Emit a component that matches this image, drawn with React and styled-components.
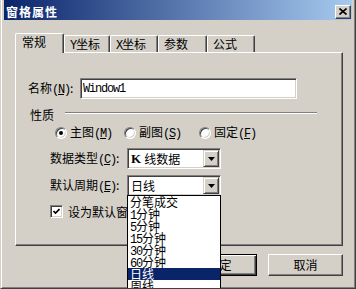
import React from 'react';
import styled, { createGlobalStyle } from 'styled-components';

const GlobalStyle = createGlobalStyle`
  html, body {
    margin: 0;
    padding: 0;
    width: 356px;
    height: 289px;
    overflow: hidden;
    background: #d4d0c8;
  }
  body {
    font-family: "Noto Sans CJK SC", "Liberation Sans", sans-serif;
    font-size: 12px;
    color: #000;
  }
`;

const Window = styled.div`
  width: 356px;
  height: 289px;
  box-sizing: border-box;
  overflow: hidden;
  background: #d4d0c8;
  border-left: 1px solid #d4d0c8;
  border-right: 1px solid #404040;
  border-bottom: 1px solid #404040;
  box-shadow: inset 1px 0 #fff, inset -1px -1px #808080;
  padding: 0 3px 3px 3px;
`;

const TitleBar = styled.div`
  height: 20px;
  box-sizing: border-box;
  padding: 3px 1px 0 2px;
  display: flex;
  align-items: center;
  background: linear-gradient(to right, #0a246a, #a6caf0);
`;

const TitleText = styled.div`
  flex: 1;
  color: #fff;
  font-weight: bold;
  font-size: 12px;
  letter-spacing: 1px;
  line-height: 14px;
`;

const CloseButton = styled.div`
  width: 16px;
  height: 14px;
  box-sizing: border-box;
  background: #d4d0c8;
  border: 1px solid;
  border-color: #fff #404040 #404040 #fff;
  box-shadow: inset -1px -1px #808080;
  display: flex;
  align-items: center;
  justify-content: center;
`;

const Body = styled.div`
  padding: 13px 0 0 11px;
`;

const TabRow = styled.div`
  display: flex;
  align-items: flex-end;
  height: 20px;
  margin-bottom: -1px;
  position: relative;
  z-index: 1;
`;

const Tab = styled.div`
  width: ${(p) => p.$w}px;
  height: ${(p) => (p.$active ? 20 : 17)}px;
  margin-bottom: ${(p) => (p.$active ? 0 : 1)}px;
  box-sizing: border-box;
  padding: 1px 0 0 ${(p) => (p.$active ? 6 : 5)}px;
  line-height: 14px;
  background: #d4d0c8;
  border-top: 1px solid #fff;
  border-left: 1px solid #fff;
  border-right: 1px solid #404040;
  border-radius: 2px 2px 0 0;
  box-shadow: inset -1px 0 #808080;
  white-space: nowrap;
`;

const Panel = styled.div`
  width: 328px;
  height: 194px;
  box-sizing: border-box;
  border-top: 1px solid #fff;
  border-left: 1px solid #fff;
  border-right: 1px solid #404040;
  border-bottom: 1px solid #404040;
  box-shadow: inset -1px -1px #808080;
  padding: 25px 0 0 12px;
`;

const Row = styled.div`
  display: flex;
  align-items: center;
  height: ${(p) => p.$h || 21}px;
  margin-top: ${(p) => p.$mt || 0}px;
  padding-left: ${(p) => p.$pl || 0}px;
`;

const Label = styled.div`
  width: ${(p) => p.$w}px;
  flex: none;
  line-height: 14px;
  white-space: nowrap;
`;

const Lat = styled.span`
  font-family: "Liberation Mono", monospace;
  font-size: 12px;
  letter-spacing: -1.2px;
`;

const KGlyph = styled.span`
  font-family: "Liberation Serif", serif;
  font-weight: bold;
  font-size: 13px;
  margin-right: 3px;
`;

const sunken = `
  background: #fff;
  border: 1px solid;
  border-color: #808080 #fff #fff #808080;
  box-shadow: inset 1px 1px #404040, inset -1px -1px #d4d0c8;
`;

const TextBox = styled.div`
  ${sunken}
  width: 217px;
  height: 21px;
  box-sizing: border-box;
  padding-left: 2px;
  display: flex;
  align-items: center;
  font-family: "Liberation Mono", monospace;
  font-size: 12px;
  letter-spacing: -1.2px;
`;

const GroupLabel = styled.div`
  margin-left: 2px;
  line-height: 14px;
`;

const GroupLine = styled.div`
  width: 252px;
  margin-left: 11px;
  align-self: flex-start;
  margin-top: 4px;
  border-top: 1px solid #808080;
  border-bottom: 1px solid #fff;
`;

const RadioItem = styled.div`
  width: ${(p) => p.$w}px;
  flex: none;
  display: flex;
  align-items: center;
  gap: 3px;
  line-height: 14px;
  white-space: nowrap;
`;

const RadioCircle = styled.div`
  width: 12px;
  height: 12px;
  box-sizing: border-box;
  border-radius: 50%;
  ${sunken}
  display: flex;
  align-items: center;
  justify-content: center;
  &::after {
    content: '';
    display: ${(p) => (p.$checked ? 'block' : 'none')};
    width: 4px;
    height: 4px;
    border-radius: 50%;
    background: #000;
  }
`;

const Select = styled.div`
  ${sunken}
  position: relative;
  width: 94px;
  height: 21px;
  box-sizing: border-box;
  display: flex;
  align-items: stretch;
  padding: 1px;
`;

const SelectText = styled.div`
  flex: 1;
  padding-left: 2px;
  display: flex;
  align-items: center;
  line-height: 14px;
`;

const DropButton = styled.div`
  width: 16px;
  box-sizing: border-box;
  background: #d4d0c8;
  border: 1px solid;
  border-color: #d4d0c8 #404040 #404040 #d4d0c8;
  box-shadow: inset 1px 1px #fff, inset -1px -1px #808080;
  display: flex;
  align-items: center;
  justify-content: center;
`;

const DropList = styled.div`
  position: absolute;
  top: 19px;
  left: -1px;
  width: 94px;
  box-sizing: border-box;
  background: #fff;
  border: 1px solid #000;
  z-index: 5;
`;

const ListItem = styled.div`
  height: 12px;
  line-height: 12px;
  padding-left: 2px;
  white-space: nowrap;
  background: ${(p) => (p.$selected ? '#0a246a' : 'transparent')};
  color: ${(p) => (p.$selected ? '#fff' : '#000')};
`;

const CheckBox = styled.div`
  width: 13px;
  height: 13px;
  box-sizing: border-box;
  ${sunken}
  display: flex;
  align-items: center;
  justify-content: center;
  flex: none;
`;

const CheckText = styled.div`
  margin-left: 5px;
  line-height: 14px;
  white-space: nowrap;
`;

const ButtonRow = styled.div`
  width: 328px;
  margin-top: 8px;
  display: flex;
  justify-content: flex-end;
  gap: 11px;
`;

const Button = styled.div`
  width: 75px;
  height: 22px;
  box-sizing: border-box;
  background: #d4d0c8;
  display: flex;
  align-items: center;
  justify-content: center;
  line-height: 14px;
  border: 1px solid;
  border-color: ${(p) => (p.$default ? '#000' : '#fff #404040 #404040 #fff')};
  box-shadow: ${(p) =>
    p.$default
      ? 'inset 1px 1px #fff, inset -1px -1px #404040, inset -2px -2px #808080'
      : 'inset -1px -1px #808080'};
`;

const Key = ({ k }) => (
  <Lat>
    (<u>{k}</u>)
  </Lat>
);

const Arrow = () => (
  <svg width="7" height="4" viewBox="0 0 7 4">
    <path d="M0 0h7L3.5 4z" fill="#000" />
  </svg>
);

const periods = ['分笔成交', '1分钟', '5分钟', '15分钟', '30分钟', '60分钟', '日线', '周线', '月线'];

const splitDigits = (s) => {
  const m = s.match(/^(\d*)(.*)$/);
  return (
    <>
      {m[1] && <Lat>{m[1]}</Lat>}
      {m[2]}
    </>
  );
};

export default function App() {
  return (
    <>
      <GlobalStyle />
      <Window>
        <TitleBar>
          <TitleText>窗格属性</TitleText>
          <CloseButton>
            <svg width="8" height="7" viewBox="0 0 8 7">
              <path d="M0.5 0.5L7.5 6.5M7.5 0.5L0.5 6.5" stroke="#000" strokeWidth="1.6" />
            </svg>
          </CloseButton>
        </TitleBar>
        <Body>
          <TabRow>
            <Tab $w={49} $active>常规</Tab>
            <Tab $w={46}><Lat>Y</Lat>坐标</Tab>
            <Tab $w={48}><Lat>X</Lat>坐标</Tab>
            <Tab $w={49}>参数</Tab>
            <Tab $w={48}>公式</Tab>
          </TabRow>
          <Panel>
            <Row>
              <Label $w={52}>
                名称<Key k="N" />:
              </Label>
              <TextBox>Window1</TextBox>
            </Row>
            <Row $h={14} $mt={9}>
              <GroupLabel>性质</GroupLabel>
              <GroupLine />
            </Row>
            <Row $h={14} $mt={4} $pl={27}>
              <RadioItem $w={69}>
                <RadioCircle $checked />
                <span>主图<Key k="M" /></span>
              </RadioItem>
              <RadioItem $w={75}>
                <RadioCircle />
                <span>副图<Key k="S" /></span>
              </RadioItem>
              <RadioItem $w={60}>
                <RadioCircle />
                <span>固定<Key k="F" /></span>
              </RadioItem>
            </Row>
            <Row $mt={8} $pl={22}>
              <Label $w={77}>
                数据类型<Key k="C" />:
              </Label>
              <Select>
                <SelectText>
                  <KGlyph>K</KGlyph>线数据
                </SelectText>
                <DropButton>
                  <Arrow />
                </DropButton>
              </Select>
            </Row>
            <Row $mt={6} $pl={22}>
              <Label $w={77}>
                默认周期<Key k="E" />:
              </Label>
              <Select>
                <SelectText>日线</SelectText>
                <DropButton>
                  <Arrow />
                </DropButton>
                <DropList>
                  {periods.map((p) => (
                    <ListItem key={p} $selected={p === '日线'}>
                      {splitDigits(p)}
                    </ListItem>
                  ))}
                </DropList>
              </Select>
            </Row>
            <Row $h={13} $mt={9} $pl={22}>
              <CheckBox>
                <svg width="7" height="7" viewBox="0 0 7 7">
                  <path d="M0.5 3L2.5 5L6.5 1" stroke="#000" strokeWidth="1.6" fill="none" />
                </svg>
              </CheckBox>
              <CheckText>设为默认窗口</CheckText>
            </Row>
          </Panel>
          <ButtonRow>
            <Button $default>确定</Button>
            <Button>取消</Button>
          </ButtonRow>
        </Body>
      </Window>
    </>
  );
}
